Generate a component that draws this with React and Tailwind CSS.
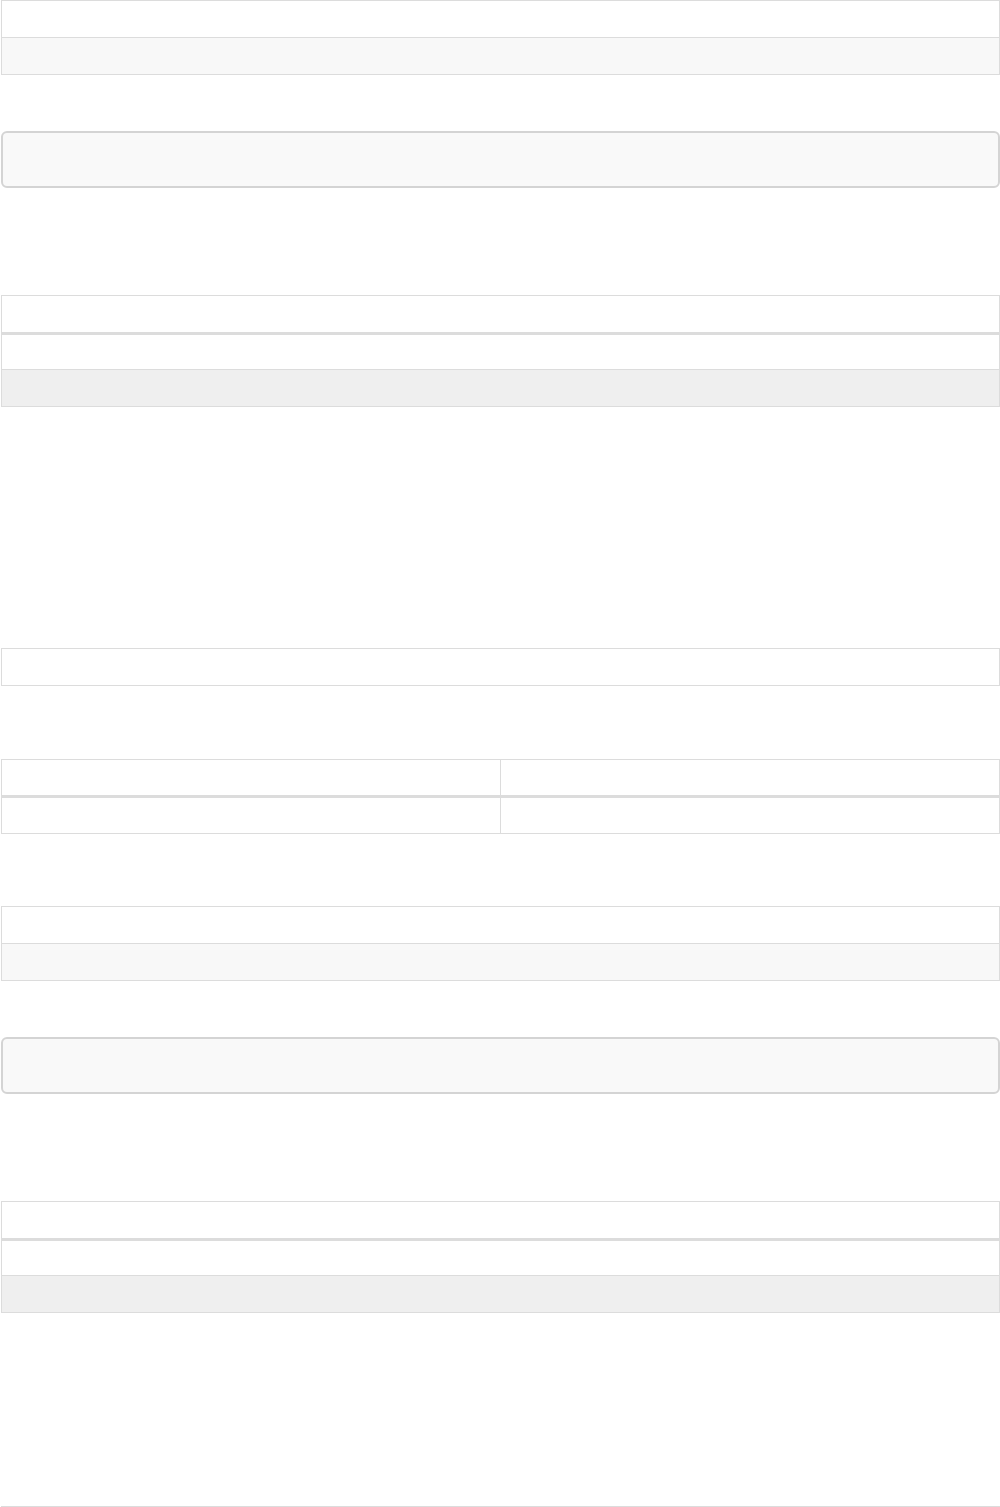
import React from 'react'

function SimpleTable() {
  return (
    <div className="ml-[1px] w-[999px] border border-[#dcdcdc]">
      <div className="h-[37px] bg-white border-b border-[#dcdcdc]" />
      <div className="h-[36px] bg-[#f8f8f8]" />
    </div>
  )
}

function CodeBox() {
  return (
    <div className="ml-[1px] w-[999px] h-[57px] rounded-[6px] border-2 border-[#d4d4d4] bg-[#f9f9f9]" />
  )
}

function HeadTable() {
  return (
    <div className="ml-[1px] w-[999px] border border-[#dcdcdc]">
      <div className="h-[39px] bg-white border-b-[3px] border-[#dcdcdc]" />
      <div className="h-[35px] bg-white border-b border-[#dcdcdc]" />
      <div className="h-[36px] bg-[#efefef]" />
    </div>
  )
}

function TwoColTable() {
  return (
    <div className="ml-[1px] w-[999px] border border-[#dcdcdc]">
      <div className="grid grid-cols-2 h-[38px] border-b-[3px] border-[#dcdcdc]">
        <div className="border-r border-[#dcdcdc]" />
        <div />
      </div>
      <div className="grid grid-cols-2 h-[35px]">
        <div className="border-r border-[#dcdcdc]" />
        <div />
      </div>
    </div>
  )
}

export default function App() {
  return (
    <div className="w-[1000px] h-[1507px] bg-white font-['Liberation_Sans',sans-serif]">
      <SimpleTable />
      <div className="mt-[56px]">
        <CodeBox />
      </div>
      <div className="mt-[107px]">
        <HeadTable />
      </div>
      <div className="mt-[241px] ml-[1px] w-[999px] h-[38px] border border-[#dcdcdc]" />
      <div className="mt-[73px]">
        <TwoColTable />
      </div>
      <div className="mt-[72px]">
        <SimpleTable />
      </div>
      <div className="mt-[56px]">
        <CodeBox />
      </div>
      <div className="mt-[107px]">
        <HeadTable />
      </div>
      <div className="mt-[193px] ml-[1px] w-[999px] border-t border-[#dcdcdc]" />
    </div>
  )
}
